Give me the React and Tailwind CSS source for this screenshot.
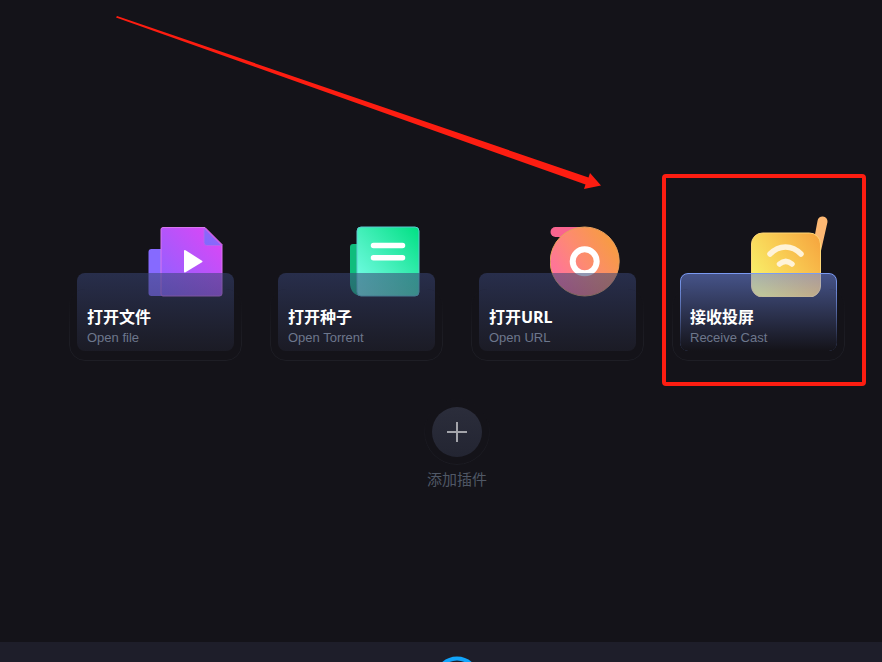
import React from 'react';

const FileIcon = () => (
  <svg width="86" height="84" viewBox="0 0 86 84" aria-hidden="true">
    <defs>
      <linearGradient id="fileFront" x1="0" y1="1" x2="1" y2="0">
        <stop offset="0" stopColor="#8a63ff" />
        <stop offset="0.45" stopColor="#b056fb" />
        <stop offset="1" stopColor="#e244f5" />
      </linearGradient>
      <linearGradient id="fileFold" x1="0" y1="1" x2="1" y2="0">
        <stop offset="0" stopColor="#7c6cff" />
        <stop offset="1" stopColor="#a060f4" />
      </linearGradient>
    </defs>
    <rect x="0.5" y="36" width="40" height="47" rx="3" fill="#866aff" />
    <path d="M15 14.500h42L74 31.500V80.500a2.500 2.500 0 0 1-2.500 2.500h-56.500a2 2 0 0 1-2-2V16.500a2 2 0 0 1 2-2z" fill="url(#fileFront)" stroke="#d877ee" strokeWidth="1" />
    <path d="M56 15l17.500 17.500H59a3 3 0 0 1-3-3z" fill="url(#fileFold)" stroke="#b464f0" strokeWidth="1" />
    <path d="M36 38v20.500a1 1 0 0 0 1.500.800L54 49.300a1 1 0 0 0 0-1.600L37.500 37.200a1 1 0 0 0-1.500.800z" fill="#fff" />
  </svg>
);

const TorrentIcon = () => (
  <svg width="86" height="84" viewBox="0 0 86 84" aria-hidden="true">
    <defs>
      <linearGradient id="torrentFront" x1="0" y1="1" x2="1" y2="0">
        <stop offset="0" stopColor="#7dfff0" />
        <stop offset="0.4" stopColor="#50f2c4" />
        <stop offset="1" stopColor="#00e083" />
      </linearGradient>
    </defs>
    <path d="M4 31h20v52H13C5 83 1 77 1 70V34a3 3 0 0 1 3-3z" fill="#0fbd7c" />
    <rect x="8" y="14" width="62" height="69" rx="4" fill="url(#torrentFront)" stroke="#5cc8cf" strokeWidth="1" />
    <path d="M24.500 32.500h29M24.500 44.700h29" stroke="#fff" strokeWidth="5.500" strokeLinecap="round" />
  </svg>
);

const UrlIcon = () => (
  <svg width="86" height="84" viewBox="0 0 86 84" aria-hidden="true">
    <defs>
      <linearGradient id="urlDisc" x1="0" y1="0.700" x2="0.850" y2="0.150">
        <stop offset="0" stopColor="#ff6fa2" />
        <stop offset="0.500" stopColor="#fd8a72" />
        <stop offset="1" stopColor="#f79b44" />
      </linearGradient>
    </defs>
    <rect x="0.500" y="14" width="34" height="10" rx="5" fill="#f9648f" />
    <circle cx="34.700" cy="48.500" r="34.500" fill="url(#urlDisc)" stroke="#e8a05c" strokeWidth="1" />
    <circle cx="34.700" cy="48.300" r="12" fill="none" stroke="#fff" strokeWidth="6" />
  </svg>
);

const CastIcon = () => (
  <svg width="86" height="84" viewBox="0 0 86 84" aria-hidden="true">
    <defs>
      <linearGradient id="castBody" x1="0" y1="0.700" x2="1" y2="0.100">
        <stop offset="0" stopColor="#f8f16a" />
        <stop offset="0.450" stopColor="#f9cf55" />
        <stop offset="1" stopColor="#f6a63f" />
      </linearGradient>
    </defs>
    <path d="M66.500 8a5 5 0 0 1 10 1L69.500 40L62 32z" fill="#fdb873" />
    <rect x="0.500" y="20" width="69" height="64" rx="11" fill="url(#castBody)" stroke="#ffd777" strokeWidth="1" />
    <path d="M19 41c9-9.500 22-9.500 31 0" fill="none" stroke="#fff3d8" strokeWidth="5.500" strokeLinecap="round" />
    <path d="M28.500 51c4-3.500 8.500-3.500 12.500 0" fill="none" stroke="#fff3d8" strokeWidth="5.500" strokeLinecap="round" />
  </svg>
);

const tiles = [
  { title: '打开文件', subtitle: 'Open file', Icon: FileIcon },
  { title: '打开种子', subtitle: 'Open Torrent', Icon: TorrentIcon },
  { title: '打开URL', subtitle: 'Open URL', Icon: UrlIcon },
  { title: '接收投屏', subtitle: 'Receive Cast', Icon: CastIcon, active: true },
];

const Tile = ({ title, subtitle, Icon, active }) => (
  <button type="button" className="relative flex w-[157px] flex-col text-left">
    <span className="-mb-6 self-end">
      <Icon />
    </span>
    <span
      className={
        active
          ? 'relative block h-[78px] w-full rounded-lg bg-linear-to-b from-[#6c85df]/57 to-[#6c85df]/0 px-2.5 pt-9'
          : 'relative block h-[78px] w-full rounded-lg bg-linear-to-b from-[#384475]/55 to-[#21222f]/55 px-2.5 pt-9'
      }
    >
      {active && (
        <span className="absolute inset-0 rounded-lg border border-[#7b9bf2] mask-b-from-0% mask-b-to-95%" />
      )}
      <span className="absolute -inset-x-2 top-4 -bottom-2.5 rounded-2xl border border-[#1e1e25] mask-t-from-20% mask-t-to-90%" />
      <span className="block text-base leading-4 font-bold text-white">{title}</span>
      <span className="mt-[5px] block font-['Liberation_Sans',sans-serif] text-[13px] leading-4 text-[#6d778c]">{subtitle}</span>
    </span>
    {active && (
      <span className="pointer-events-none absolute -top-[39px] -right-[29px] -bottom-[35px] -left-[18px] rounded border-4 border-[#fd1d11]" />
    )}
  </button>
);

// tapered arrow drawn over the tiles, tip lands next to the highlighted one
const Arrow = () => (
  <svg className="pointer-events-none absolute -top-[197px] left-[38px]" width="488" height="176" viewBox="0 0 488 176" aria-hidden="true">
    <path d="M2 0L473.500 161.500L475 157L486 169.500L469 173L470.500 168.500L1 1.500z" fill="#fd1d11" />
  </svg>
);

export default function App() {
  return (
    <div className="flex min-h-screen flex-col overflow-hidden bg-[#141319] font-['Noto_Sans','Noto_Sans_CJK_SC',sans-serif]">
      <main className="flex grow flex-col items-center pt-[213px] pl-8">
        <div className="relative flex gap-11">
          {tiles.map((tile) => (
            <Tile key={tile.title} {...tile} />
          ))}
          <Arrow />
        </div>

        <button type="button" className="mt-14 flex flex-col items-center">
          <span className="relative flex size-[50px] items-center justify-center rounded-full bg-linear-to-b from-[#2b2d3b] to-[#232532]">
            <span className="absolute -inset-2 rounded-full border border-[#1c1c23] mask-t-from-20% mask-t-to-70%" />
            <svg width="20" height="20" viewBox="0 0 20 20" aria-hidden="true">
              <path d="M10 0v20M0 10h20" stroke="#a3a4aa" strokeWidth="2" />
            </svg>
          </span>
          <span className="mt-3.5 text-[15px] leading-4 text-[#505866]">添加插件</span>
        </button>
      </main>

      <footer className="flex h-5 justify-center overflow-hidden bg-[#1e1e2a] pt-3.5 pl-8">
        <svg className="shrink-0" width="46" height="46" viewBox="0 0 46 46" aria-hidden="true">
          <circle cx="23" cy="23" r="20.500" fill="none" stroke="#12a5fb" strokeWidth="4" />
        </svg>
      </footer>
    </div>
  );
}
